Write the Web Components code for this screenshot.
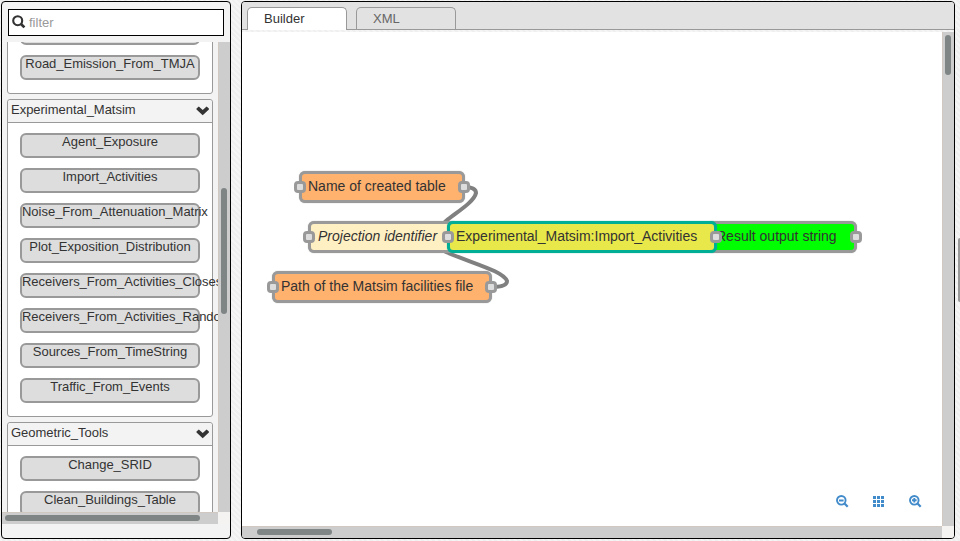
<!DOCTYPE html>
<html lang="en"><head><meta charset="utf-8"><title>Builder</title>
<style>
html,body{margin:0;height:100%;overflow:hidden}
body{font-family:"Liberation Sans",Arial,sans-serif;color:#333;background:repeating-linear-gradient(45deg,#f5f5f5 0 2px,#efefef 2px 4px)}
</style></head><body>
<wps-app></wps-app>
<script>
const define=(name,html,init)=>customElements.define(name,class extends HTMLElement{
  constructor(){super();this.attachShadow({mode:'open'});}
  connectedCallback(){if(this.ready)return;this.ready=true;const t=document.createElement('template');t.innerHTML=html;this.shadowRoot.append(t.content.cloneNode(true));if(init)init(this,this.shadowRoot);}
});
define('process-item',`<style>
:host{display:block;box-sizing:border-box;width:180px;height:25px;border:2px solid #999;border-radius:6px;background:#ddd;font-size:13px;letter-spacing:-.02px;line-height:13px;text-align:center;white-space:nowrap}
</style><slot></slot>`);
define('process-group',`<style>
:host{display:block;box-sizing:border-box;width:206px;border:1px solid #999;border-radius:3px;background:#fff}
header{display:flex;justify-content:space-between;height:23px;box-sizing:border-box;border-bottom:1px solid #999;background:#f3f3f3;border-radius:3px 3px 0 0;padding:0 3px;font-size:13px;letter-spacing:-.02px;line-height:19px}
svg{margin-top:6px}
.body{display:flex;flex-direction:column;gap:10px;padding:10px 12px 13px}
</style><header><span></span><svg width="13" height="10" viewBox="0 0 13 10"><path d="M.5 2.6L2.8 .4L6.7 4.1L10.6 .4L12.9 2.6V3.4L6.7 9.2L.5 3.4Z" fill="#333"/></svg></header><div class="body"><slot></slot></div>`,
(h,r)=>{r.querySelector('span').textContent=h.getAttribute('label')});
define('scroll-bar',`<style>
:host{display:block;box-sizing:border-box;background:#cdcdcd;padding:3px}
:host([dir=v]){width:12px;border-left:1px solid #d0c9c2;padding-left:2px}
:host([dir=h]){height:12px;border-top:1px solid #d0c9c2;padding-top:2px}
i{display:block;border-radius:3px;background:#7f8484;width:6px;height:6px}
</style><i></i>`,(h,r)=>{const i=r.querySelector('i'),v=h.getAttribute('dir')=='v';i.style[v?'marginTop':'marginLeft']=h.getAttribute('start')+'px';i.style[v?'height':'width']=h.getAttribute('size')+'px'});
define('process-palette',`<style>
:host{display:flex;flex:none;flex-direction:column;box-sizing:border-box;width:230px;height:538px;border:1px solid #000;border-radius:4px;background:#f3f3f3;overflow:hidden}
.filter{display:flex;align-items:center;box-sizing:border-box;width:216px;height:27px;margin:7px 0 6px 6px;flex:none;border:1px solid #000;background:#fff;padding:0 0 1px 3px;gap:3px;font-size:13px;color:#999}
.grid{display:grid;grid-template:470px 12px/216px 12px}
.view{overflow:hidden;min-height:0}
.list{display:flex;flex-direction:column;gap:5px;padding-left:5px;margin-top:-56px}
.corner{background:#f4f3f1}
</style>
<div class="filter"><svg width="14" height="14" viewBox="0 0 14 14" fill="none" stroke="#333"><circle cx="5.7" cy="5.7" r="4.5" stroke-width="2.1"/><path d="M9 9L12.4 12.4" stroke-width="2.7"/></svg><span>filter</span></div>
<div class="grid"><div class="view"><div class="list">
<process-group label=""><process-item></process-item><process-item>Road_Emission_From_TMJA</process-item></process-group>
<process-group label="Experimental_Matsim"><process-item>Agent_Exposure</process-item><process-item>Import_Activities</process-item><process-item>Noise_From_Attenuation_Matrix</process-item><process-item>Plot_Exposition_Distribution</process-item><process-item>Receivers_From_Activities_Closest</process-item><process-item>Receivers_From_Activities_Random</process-item><process-item>Sources_From_TimeString</process-item><process-item>Traffic_From_Events</process-item></process-group>
<process-group label="Geometric_Tools"><process-item>Change_SRID</process-item><process-item>Clean_Buildings_Table</process-item></process-group>
</div></div><scroll-bar dir="v" start="143" size="126"></scroll-bar><scroll-bar dir="h" start="0" size="195"></scroll-bar><div class="corner"></div></div>`);
define('tab-label',`<style>
:host{display:block;box-sizing:border-box;width:100px;height:22px;border:1px solid #999;border-bottom:0;border-radius:5px 5px 0 0;padding-left:16px;font-size:13px;line-height:21px;color:#666}
:host([active]){background:#fff;color:#333;height:23px}
</style><slot></slot>`);
define('flow-node',`<style>
:host{position:absolute;box-sizing:border-box;height:32px;border:3px solid #999;border-radius:6px;font-size:14px;line-height:24px;white-space:nowrap;padding-left:6px;box-shadow:0 0 1px #999}
:host([selected]){border-color:#00ae96;box-shadow:0 0 1px #00ae96}
:host([optional]){font-style:italic;padding-left:7px}
b{position:absolute;box-sizing:border-box;top:7px;width:12px;height:12px;border:3px solid #999;border-radius:4px;background:#ddd}
.in{left:-8px}.out{right:-8px}
</style><slot></slot><b class="in"></b><b class="out"></b>`,(h,r)=>{
h.style.left=h.getAttribute('x')+'px';h.style.top=h.getAttribute('y')+'px';h.style.width=h.getAttribute('w')+'px';h.style.background=h.getAttribute('fill')});
define('zoom-tools',`<style>
:host{position:absolute;left:594px;top:463px;display:flex;gap:24px}
</style>
<svg width="13" height="13" viewBox="0 0 13 13" fill="none" stroke="#428bca"><circle cx="5.3" cy="5.3" r="4.3" stroke-width="1.9"/><path d="M8.5 8.5L11.7 11.7" stroke-width="2.3"/><path d="M3 5.5h4.6" stroke-width="2"/></svg>
<svg width="12" height="13" viewBox="0 0 12 13" fill="#428bca"><path d="M0 1h3v3H0zM4 1h3v3H4zM8 1h3v3H8zM0 5h3v3H0zM4 5h3v3H4zM8 5h3v3H8zM0 9h3v3H0zM4 9h3v3H4zM8 9h3v3H8z"/></svg>
<svg width="13" height="13" viewBox="0 0 13 13" fill="none" stroke="#428bca"><circle cx="5.3" cy="5.3" r="4.3" stroke-width="1.9"/><path d="M8.5 8.5L11.7 11.7" stroke-width="2.3"/><path d="M3 5.3h4.6M5.3 3v4.6" stroke-width="1.9"/></svg>`);
define('flow-builder',`<style>
:host{display:flex;flex:none;flex-direction:column;box-sizing:border-box;width:714px;height:538px;border:1px solid #000;border-radius:4px;overflow:hidden}
nav{display:flex;align-items:flex-start;gap:9px;height:28px;flex:none;box-sizing:border-box;border-bottom:1px solid #999;background:#e2e2e2;padding:5px 0 0 5px;margin-bottom:2px}
.grid{display:grid;grid-template:494px 12px/700px 12px}
.canvas{position:relative;background:#fff;overflow:hidden}
.wires{position:absolute;left:0;top:0}
.corner{background:#f4f3f1}
</style><nav><tab-label active>Builder</tab-label><tab-label>XML</tab-label></nav>
<div class="grid"><div class="canvas">
<svg class="wires" width="700" height="494" viewBox="242 32 700 494" fill="none" stroke="#808080" stroke-width="4"><path d="M464 187C473 187 476 189 476 193C474 202 457 212 446 221L432 235"/><path d="M491 287C503 287 507 285 507 281C503 271 474 264 446 252L432 243"/></svg>
<flow-node x="57" y="139" w="166" fill="#ffb16e">Name of created table</flow-node>
<flow-node x="66" y="189" w="150" fill="#fff0c4" optional>Projection identifier</flow-node>
<flow-node x="30" y="239" w="220" fill="#ffb16e">Path of the Matsim facilities file</flow-node>
<flow-node x="465" y="189" w="150" fill="#0f0">Result output string</flow-node>
<flow-node x="205" y="189" w="270" fill="#e8e84a" selected>Experimental_Matsim:Import_Activities</flow-node>
<zoom-tools></zoom-tools>
</div><scroll-bar dir="v" start="0" size="40"></scroll-bar><scroll-bar dir="h" start="12" size="75"></scroll-bar><div class="corner"></div></div>`);
define('wps-app',`<style>
:host{display:flex;box-sizing:border-box;width:960px;height:541px;padding:1px 0 0 1px;gap:10px;overflow:hidden}
.grip{width:7px;height:64px;flex:none;background:#999;border-radius:2px;margin:237px 0 0 -7px}
</style><process-palette></process-palette><flow-builder></flow-builder><div class="grip"></div>`);
</script></body></html>
